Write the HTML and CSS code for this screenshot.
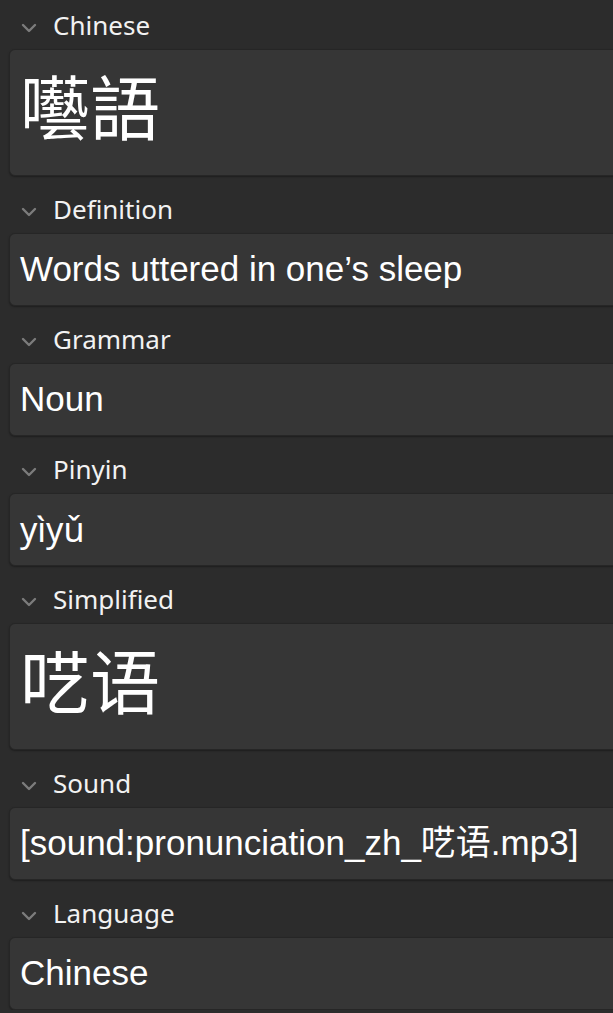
FILE: index.html
```html
<!DOCTYPE html>
<html lang="en">
<head>
<meta charset="utf-8">
<title>Editor</title>
<link rel="stylesheet" href="styles.css">
</head>
<body>
<div class="fields">
  <section class="field-block first">
    <div class="label-row">
      <svg class="chevron" width="16" height="10" viewBox="0 0 16 10"><polyline points="2,2 8,8 14,2"/></svg>
      <span class="label">Chinese</span>
    </div>
    <div class="field big tc">囈語</div>
  </section>
  <section class="field-block">
    <div class="label-row">
      <svg class="chevron" width="16" height="10" viewBox="0 0 16 10"><polyline points="2,2 8,8 14,2"/></svg>
      <span class="label">Definition</span>
    </div>
    <div class="field">Words uttered in one’s sleep</div>
  </section>
  <section class="field-block">
    <div class="label-row">
      <svg class="chevron" width="16" height="10" viewBox="0 0 16 10"><polyline points="2,2 8,8 14,2"/></svg>
      <span class="label">Grammar</span>
    </div>
    <div class="field">Noun</div>
  </section>
  <section class="field-block">
    <div class="label-row">
      <svg class="chevron" width="16" height="10" viewBox="0 0 16 10"><polyline points="2,2 8,8 14,2"/></svg>
      <span class="label">Pinyin</span>
    </div>
    <div class="field pinyin">yìyǔ</div>
  </section>
  <section class="field-block">
    <div class="label-row">
      <svg class="chevron" width="16" height="10" viewBox="0 0 16 10"><polyline points="2,2 8,8 14,2"/></svg>
      <span class="label">Simplified</span>
    </div>
    <div class="field big sc">呓语</div>
  </section>
  <section class="field-block">
    <div class="label-row">
      <svg class="chevron" width="16" height="10" viewBox="0 0 16 10"><polyline points="2,2 8,8 14,2"/></svg>
      <span class="label">Sound</span>
    </div>
    <div class="field">[sound:pronunciation_zh_呓语.mp3]</div>
  </section>
  <section class="field-block">
    <div class="label-row">
      <svg class="chevron" width="16" height="10" viewBox="0 0 16 10"><polyline points="2,2 8,8 14,2"/></svg>
      <span class="label">Language</span>
    </div>
    <div class="field">Chinese</div>
  </section>
</div>
</body>
</html>
```

FILE: styles.css
```css
html, body {
  margin: 0;
  padding: 0;
  overflow: hidden;
  background: #2c2c2c;
}

body {
  color: #f2f2f2;
  font-family: "Noto Sans", sans-serif;
}

.fields {
  padding: 10px 0 0 9px;
}

.field-block {
  margin-top: 18px;
}

.field-block.first {
  margin-top: 0;
}

.label-row {
  display: flex;
  align-items: center;
  height: 30px;
  padding-left: 12px;
}

.chevron {
  display: block;
  margin-top: 6px;
  fill: none;
  stroke: #7c7c7c;
  stroke-width: 2.4;
  stroke-linecap: round;
  stroke-linejoin: round;
}

.label {
  margin-left: 16px;
  font-family: "Noto Sans", sans-serif;
  font-size: 26px;
  line-height: 30px;
  color: #f2f2f2;
}

.field {
  margin-top: 9px;
  margin-right: -14px;
  padding: 15px 10px 16px;
  background: #363636;
  border: 1px solid #262626;
  border-radius: 6px;
  box-shadow: 0 1px 2px rgba(0, 0, 0, 0.35);
  font-family: "Liberation Sans", "Noto Sans CJK SC", sans-serif;
  font-size: 35px;
  line-height: 40px;
  color: #ffffff;
  white-space: nowrap;
}

.field.pinyin {
  font-family: "Noto Sans", sans-serif;
  font-size: 34px;
}

.field.big {
  font-size: 70px;
  line-height: 93px;
  padding-top: 8px;
  padding-bottom: 24px;
}

.field.tc {
  font-family: "Noto Sans CJK TC", sans-serif;
}

.field.sc {
  font-family: "Noto Sans CJK SC", sans-serif;
}
```
